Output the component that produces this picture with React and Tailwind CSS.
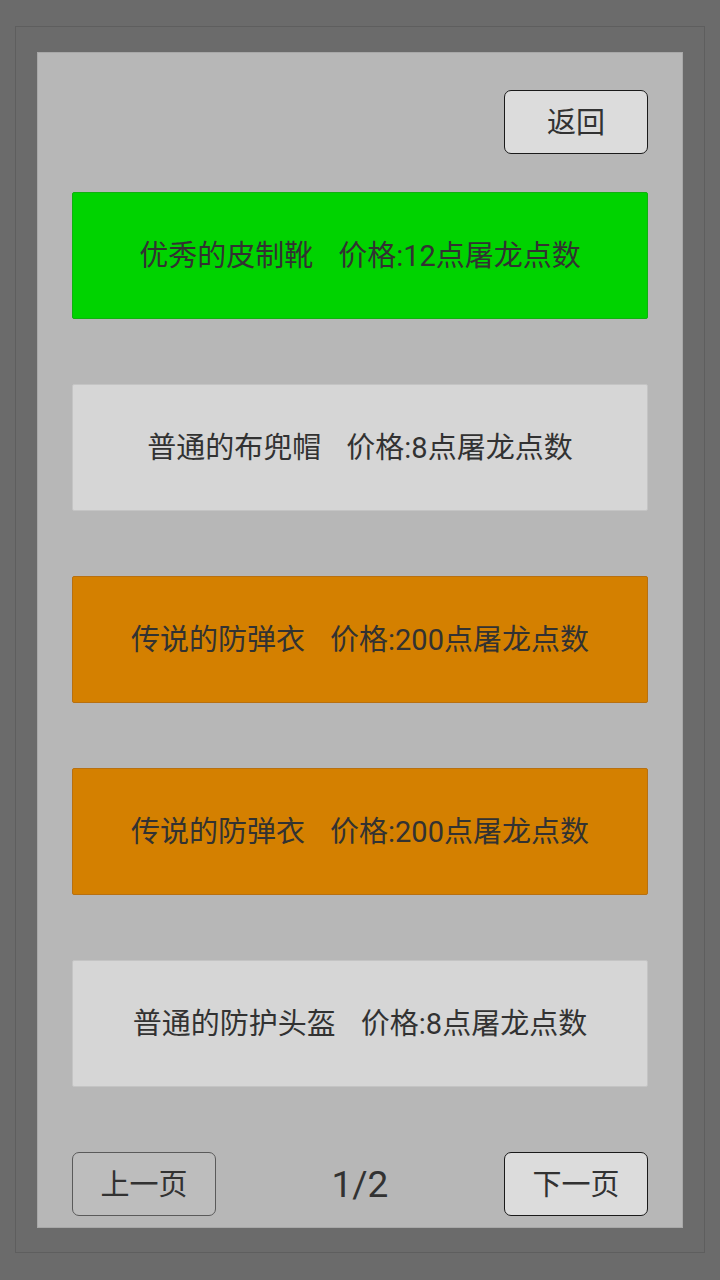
const items = [
  { name: '优秀的皮制靴', price: 12, tone: 'bg-[#00d300] border-[#10b010]' },
  { name: '普通的布兜帽', price: 8, tone: 'bg-[#d6d6d6] border-[#c4c4c4]' },
  { name: '传说的防弹衣', price: 200, tone: 'bg-[#d48000] border-[#b87010]' },
  { name: '传说的防弹衣', price: 200, tone: 'bg-[#d48000] border-[#b87010]' },
  { name: '普通的防护头盔', price: 8, tone: 'bg-[#d6d6d6] border-[#c4c4c4]' },
];

const font = { fontFamily: 'Roboto, "Noto Sans CJK SC", sans-serif' };

export default function App() {
  return (
    <div className="w-[720px] h-[1280px] bg-[#6b6b6b] pt-[26px] px-[15px]" style={font}>
      <div className="h-[1227px] border border-[#5e5e5e] pt-[25px] px-[21px]">
        <div className="h-[1176px] bg-[#b7b7b7] border border-[#a8a8a8] px-[34px] pt-[37px] flex flex-col">
          <div className="flex justify-end">
            <button className="w-[144px] h-[64px] rounded-[7px] border-[1.5px] border-[#1a1a1a] bg-[#dcdcdc] text-[29px] text-[#323232] pt-[3px]">
              返回
            </button>
          </div>

          <div className="mt-[38px] flex flex-col gap-[65px]">
            {items.map((item, i) => (
              <div
                key={i}
                className={`h-[127px] border rounded-[2px] flex items-center justify-center text-[29px] text-[#323232] pt-[3px] ${item.tone}`}
              >
                <span>{item.name}</span>
                <span className="ml-[25px]">价格:{item.price}点屠龙点数</span>
              </div>
            ))}
          </div>

          <div className="mt-[65px] flex items-center justify-between">
            <button className="w-[144px] h-[64px] rounded-[7px] border border-[#5a5a5a] bg-[#bdbdbd] text-[29px] text-[#323232] pt-[3px]">
              上一页
            </button>
            <span className="text-[37px] text-[#323232] pt-[2px]">1/2</span>
            <button className="w-[144px] h-[64px] rounded-[7px] border-[1.5px] border-[#1a1a1a] bg-[#dcdcdc] text-[29px] text-[#323232] pt-[3px]">
              下一页
            </button>
          </div>
        </div>
      </div>
    </div>
  );
}
